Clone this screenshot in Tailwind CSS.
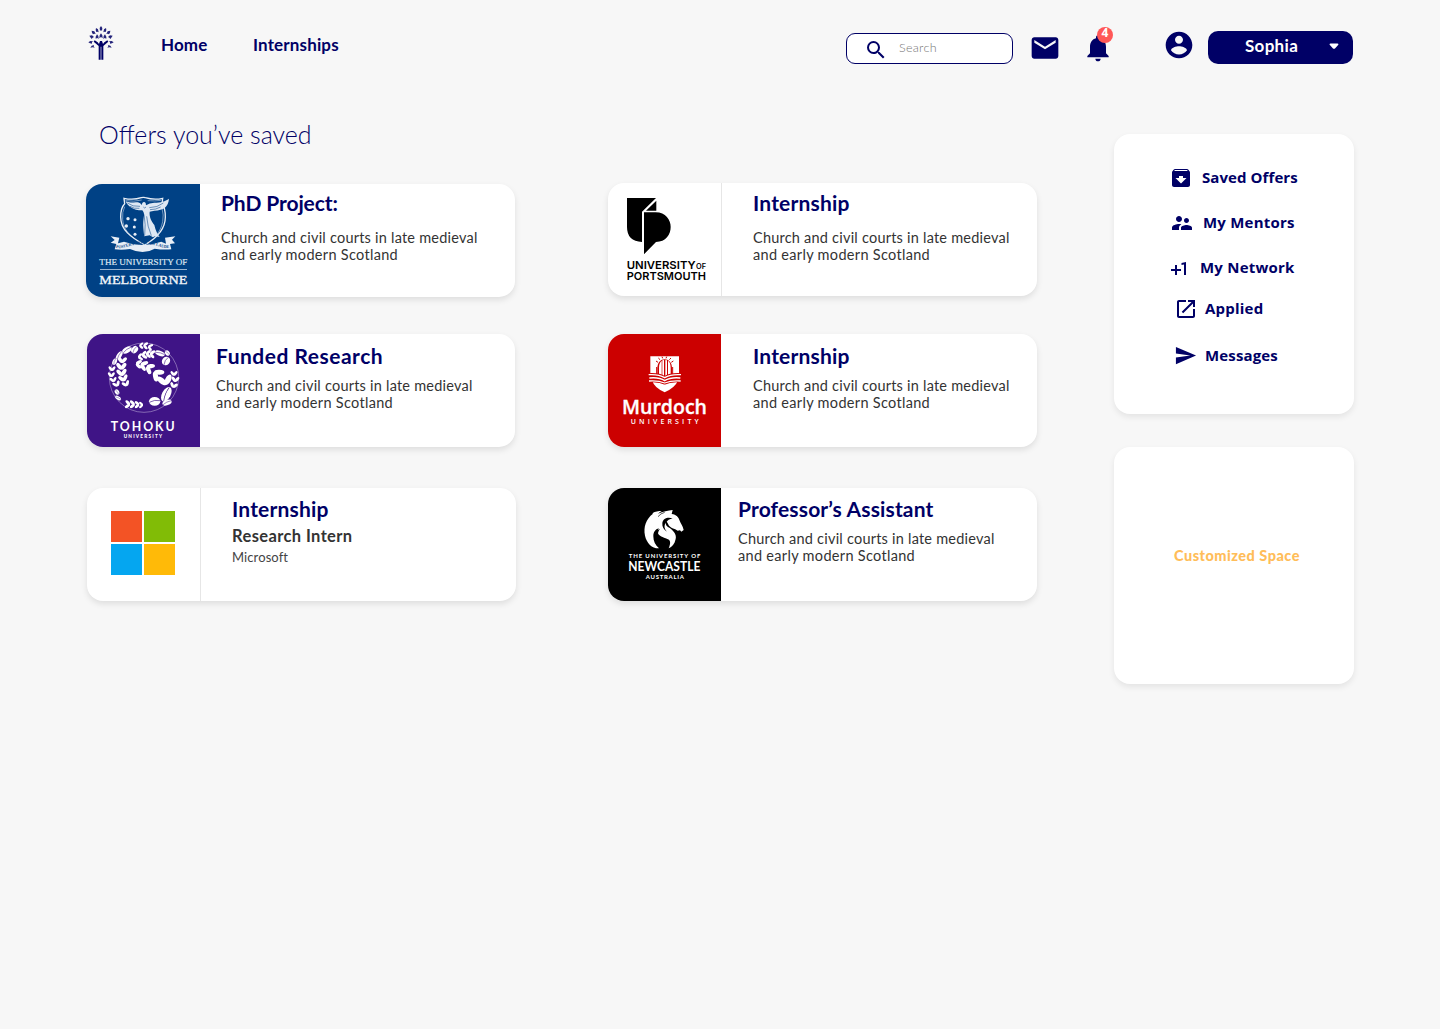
<!DOCTYPE html>
<html lang="en">
<head>
<meta charset="utf-8">
<title>Saved offers</title>
<script src="https://cdn.jsdelivr.net/npm/@tailwindcss/browser@4"></script>
</head>
<body class="min-h-screen bg-[#f7f7f7] font-['Lato',sans-serif] text-[#000066]">
<header class="flex h-[92px] items-start pl-[86px] pr-[87px] pt-[22px]">
  <svg class="h-[42px] w-[30px]" viewBox="0 0 90 126" fill="#000066">
    <path d="M38 113V72l-7-6-8-7 3-4 9 6 4 5 3-9h6l3 9 4-5 9-6 3 4-8 7-7 6v41h-6V74h-2v39z"/>
    <g opacity=".85">
      <path d="M45 12l4 6-1 9-3-3-3 3-1-9zM30 18l6 4 2 9-4-2-3 1-2-6zM60 18l-6 4-2 9 4-2 3 1 2-6zM17 26l8 2 4 8-4-1-4 2-3-5zM73 26l-8 2-4 8 4-1 4 2 3-5zM10 41l8-1 6 5-4 2-3 4-4-5zM80 41l-8-1-6 5 4 2 3 4 4-5zM7 61l6-4 8 1-3 3 0 4-6-1zM83 61l-6-4-8 1 3 3 0 4 6-1zM13 77l4-6 7-2-1 4 3 4-6-1zM77 77l-4-6-7-2 1 4-3 4 6-1z"/>
      <path d="M33 37l4 5 1 9-4-3-5 2v-6zM45 34l4 6 1 9-5-4-5 4 1-9zM57 37l-4 5-1 9 4-3 5 2v-6z"/>
    </g>
  </svg>
  <nav class="ml-[45px] mt-[11px] flex text-[17px] font-bold leading-6">
    <a class="w-[92px] tracking-[0.1px]">Home</a>
    <a class="tracking-[0.15px]">Internships</a>
  </nav>
  <div class="ml-auto flex items-start">
    <div class="mt-[11px] flex h-[31px] w-[167px] items-start rounded-[9px] border border-[#000066] bg-white pl-[17px]">
      <svg class="mt-[4px] h-6 w-6" viewBox="0 0 24 24" fill="#000066"><path d="M15.5 14h-.79l-.28-.27A6.47 6.47 0 0 0 16 9.5 6.5 6.5 0 1 0 9.5 16c1.61 0 3.09-.59 4.23-1.57l.27.28v.79l5 4.99L20.49 19zm-6 0C7.01 14 5 11.99 5 9.5S7.01 5 9.5 5 14 7.01 14 9.5 11.99 14 9.5 14z"/></svg>
      <span class="ml-[11px] mt-[5px] text-[12.5px] font-light leading-[18px] tracking-[0.3px] text-[#757575]">Search</span>
    </div>
    <svg class="ml-[16px] mt-[10px] h-[32px] w-[32px]" viewBox="0 0 24 24" fill="#000066"><path d="M20 4H4c-1.100 0-2 .9-2 2v12c0 1.100.9 2 2 2h16c1.100 0 2-.9 2-2V6c0-1.100-.9-2-2-2zm0 4l-8 5-8-5V6l8 5 8-5z"/></svg>
    <div class="relative ml-[21px] mt-[10px] h-[32px] w-[32px]">
      <svg class="h-[32px] w-[32px]" viewBox="0 0 24 24" fill="#000066"><path d="M12 22c1.100 0 2-.9 2-2h-4c0 1.100.89 2 2 2zm6-6v-5c0-3.070-1.640-5.640-4.500-6.320V4c0-.83-.67-1.500-1.500-1.500s-1.500.67-1.500 1.500v.68C7.630 5.360 6 7.920 6 11v5l-2 2v1h16v-1z"/></svg>
      <span class="absolute -top-[5px] left-[15px] flex h-4 w-4 justify-center rounded-full bg-[#ff5757] font-['Open_Sans',sans-serif] text-[12px] font-bold leading-[12px] text-white">4</span>
    </div>
    <svg class="ml-[49px] mt-[7px] h-[32px] w-[32px]" viewBox="0 0 24 24" fill="#000066"><path d="M12 2C6.480 2 2 6.480 2 12s4.480 10 10 10 10-4.480 10-10S17.520 2 12 2zm0 3c1.660 0 3 1.340 3 3s-1.340 3-3 3-3-1.340-3-3 1.340-3 3-3zm0 14.200c-2.500 0-4.710-1.280-6-3.220.03-1.990 4-3.080 6-3.080 1.990 0 5.970 1.090 6 3.080-1.290 1.940-3.500 3.220-6 3.220z"/></svg>
    <button class="ml-[13px] mt-[9px] flex h-[33px] w-[145px] items-start rounded-[10px] bg-[#000066] pl-[37px] text-white">
      <span class="mt-[3px] text-[17px] font-bold leading-6 tracking-[0.3px]">Sophia</span>
      <svg class="ml-auto mr-[14px] mt-[12px] h-[7px] w-[10px]" viewBox="0 0 10 7" fill="#fff"><path d="M1.500.5h7c1 0 1.200 1 .6 1.600L6 5.400c-.6.600-1.400.6-2 0L.9 2.100C.3 1.500.5.500 1.500.5z"/></svg>
    </button>
  </div>
</header>

<main class="flex items-start pl-[86px]">
  <section class="w-[951px]">
    <h1 class="h-[91px] pl-[13px] pt-[26px] text-[25px] font-light leading-8">Offers you’ve saved</h1>
    <div class="grid grid-cols-[430px_429px] gap-x-[92px]">

      <article class="mt-px flex h-[113px] w-[429px] overflow-hidden rounded-2xl bg-white shadow-[0_3px_6px_rgba(0,0,0,0.1)]">
        <svg class="h-[113px] w-[114px] shrink-0" viewBox="18 27 342 339" preserveAspectRatio="none">
          <rect x="18" y="27" width="342" height="339" fill="#004185"/>
          <g fill="none" stroke="#e8eef6" stroke-width="3">
            <path d="M132 70q28 6 52-2 6-2 12 0 26 8 52 2l-2 16q10 12 10 40c0 35-20 60-62 84-42-24-72-45-72-84q0-28 12-40z" stroke-width="4"/>
            <path d="M137 77q25 4 48-2M203 77q22 2 40-1M134 95q-8 16-6 38c2 24 14 42 34 56M246 100q6 20 2 40c-3 18-12 34-24 46" stroke-width="1.500"/>
          </g>
          <path d="M130 74c10 10 30 8 44 8q8 2 11 8l2-6q5-6 10 0l1 7q10-8 25-8c20 0 32-4 44-12-2 24-16 35-44 36l-14 3c-2 16 6 30 14 40 4 16 8 26 16 36l-14-3-6 4-10-6-16 3c-4-28-4-40-2-56 2-10 2-14-4-22-28 0-44-12-53-32z" fill="#dfe8f3"/>
          <path d="M142 84q16 12 38 10M150 94q12 8 28 6M208 98q24 0 42-14M210 104q18 0 32-8M192 118q6 30 2 64M200 124q2 30 14 58M190 96q4 6 8 0" fill="none" stroke="#004185" stroke-width="1.600"/>
          <g fill="#e8eef6"><circle cx="144" cy="131" r="5"/><circle cx="165" cy="134" r="4.500"/><circle cx="139" cy="153" r="5"/><circle cx="163" cy="156" r="4.500"/><circle cx="165" cy="178" r="4.500"/></g>
          <path d="M92 184l26 4-4 17 18-5q55 20 112 0l14 6-3-18 31-4-10 10 9 11-15 2 4 16q-26 2-50-2-34 20-74 1-24 4-46 1l5-16-17-4 12-8z" fill="#e8eef6"/>
          <path id="motto" d="M108 219q20 2 40-6 42-10 84 0 20 8 42 6" fill="none"/>
          <text font-family="Liberation Serif" font-size="13" font-weight="700" fill="#0c4a8c" textLength="162" lengthAdjust="spacingAndGlyphs"><textPath href="#motto">POSTERA CRESCAM LAUDE</textPath></text>
          <text x="58" y="269" font-family="Liberation Serif" font-size="27" fill="#dfe8f3" stroke="#dfe8f3" stroke-width=".5" textLength="264" lengthAdjust="spacingAndGlyphs">THE UNIVERSITY OF</text>
          <rect x="60" y="282" width="261" height="2.500" fill="#b8cce0"/>
          <text x="58" y="327" font-family="Liberation Serif" font-size="39" fill="#f2f6fa" stroke="#f2f6fa" stroke-width="1" textLength="264" lengthAdjust="spacingAndGlyphs">MELBOURNE</text>
        </svg>
        <div class="pl-[21px] pt-[5px]">
          <h2 class="text-[21px] font-bold leading-7 -tracking-[0.1px]">PhD Project:</h2>
          <p class="mt-[12px] text-[14.5px] leading-[17px] tracking-[0.22px] text-[#333]">Church and civil courts in late medieval<br><span class="tracking-[0.31px]">and early modern Scotland</span></p>
        </div>
      </article>

      <article class="flex h-[113px] w-[429px] overflow-hidden rounded-2xl bg-white shadow-[0_3px_6px_rgba(0,0,0,0.1)]">
        <div class="h-[113px] w-[114px] shrink-0 border-r border-[#e6e6e6]">
          <svg class="h-[113px] w-[113px]" viewBox="24 24 339 339" fill="#000">
            <path d="M81 69h87L126 110v91q-45-2-45-45z"/>
            <path d="M169 77v30h-31z"/>
            <path d="M132 112h35c60 0 60 89 1 89L132 238z"/>
            <g font-family="Inter" font-weight="600">
              <text x="80" y="282" font-size="33" textLength="207" lengthAdjust="spacingAndGlyphs">UNIVERSITY</text>
              <text x="288" y="282" font-size="22" textLength="30" lengthAdjust="spacingAndGlyphs">OF</text>
              <text x="80" y="315" font-size="33" textLength="238" lengthAdjust="spacingAndGlyphs">PORTSMOUTH</text>
            </g>
          </svg>
        </div>
        <div class="pl-[31px] pt-[6px]">
          <h2 class="text-[21px] font-bold leading-7 tracking-[0.2px]">Internship</h2>
          <p class="mt-[12px] text-[14.5px] leading-[17px] tracking-[0.22px] text-[#333]">Church and civil courts in late medieval<br><span class="tracking-[0.31px]">and early modern Scotland</span></p>
        </div>
      </article>

      <article class="ml-px mt-[37px] flex h-[113px] w-[428px] overflow-hidden rounded-2xl bg-white shadow-[0_3px_6px_rgba(0,0,0,0.1)]">
        <svg class="h-[113px] w-[113px] shrink-0" viewBox="21 27 339 339">
          <defs>
            <g id="pair"><ellipse cx="-5" cy="-1" rx="4.500" ry="9" transform="rotate(-38 -5 -1)"/><ellipse cx="5" cy="-1" rx="4.500" ry="9" transform="rotate(38 5 -1)"/></g>
            <g id="bean"><ellipse rx="17" ry="13" /><path d="M-16 3Q0-6 16-2" fill="none" stroke="#3f1486" stroke-width="2"/></g>
          </defs>
          <rect x="21" y="27" width="339" height="339" fill="#3f1486"/>
          <circle cx="192" cy="158" r="104" fill="none" stroke="#cbbde0" stroke-width="1.500"/>
          <g fill="#fff">
            <use href="#pair" transform="translate(126 106) rotate(8) scale(1.200)"/>
            <use href="#pair" transform="translate(124 125) scale(1.300)"/>
            <use href="#pair" transform="translate(125 144) rotate(-5) scale(1.300)"/>
            <use href="#pair" transform="translate(130 161) rotate(-14) scale(1.200)"/>
            <use href="#pair" transform="translate(138 177) rotate(-24) scale(1)"/>
            <use href="#pair" transform="translate(175 117) rotate(98) scale(1.100)"/>
            <use href="#pair" transform="translate(190 121) rotate(108) scale(1.300)"/>
            <use href="#pair" transform="translate(208 129) rotate(118) scale(1.400)"/>
            <use href="#pair" transform="translate(231 147) rotate(130) scale(1.700)"/>
            <use href="#pair" transform="translate(255 168) rotate(-10) scale(1.900)"/>
            <use href="#pair" transform="translate(180 96) rotate(80) scale(.9)"/>
            <use href="#pair" transform="translate(192 90) rotate(80) scale(1)"/>
            <use href="#pair" transform="translate(204 87) rotate(90) scale(1)"/>
            <use href="#pair" transform="translate(216 87) rotate(100) scale(1)"/>
            <use href="#pair" transform="translate(144 238) rotate(-85) scale(1)"/>
            <use href="#pair" transform="translate(158 238) rotate(-90) scale(1)"/>
            <use href="#pair" transform="translate(172 239) rotate(-90) scale(.9)"/>
            <use href="#pair" transform="translate(184 240) rotate(-90) scale(.8)"/>
            <use href="#pair" transform="translate(183 62) rotate(90) scale(.8)"/>
            <use href="#pair" transform="translate(196 62) rotate(95) scale(.9)"/>
            <use href="#pair" transform="translate(210 66) rotate(105) scale(.9)"/>
            <use href="#pair" transform="translate(96 132) scale(.9)"/>
            <use href="#pair" transform="translate(94 150) scale(.9)"/>
            <use href="#pair" transform="translate(100 165) rotate(-10) scale(.9)"/>
            <use href="#pair" transform="translate(110 178) rotate(-25) scale(1)"/>
            <use href="#pair" transform="translate(282 146) scale(.9)"/>
            <use href="#pair" transform="translate(286 164) rotate(5) scale(1)"/>
            <use href="#pair" transform="translate(281 182) rotate(15) scale(1)"/>
            <use href="#bean" transform="translate(224 229)"/>
            <use href="#bean" transform="translate(259 208) rotate(-62) scale(1.400 1)"/>
            <use href="#bean" transform="translate(261 233) rotate(-20) scale(.85 .6)"/>
            <use href="#bean" transform="translate(258 108) rotate(-50) scale(.8 .9)"/>
            <use href="#bean" transform="translate(240 85) rotate(20) scale(.9 .6)"/>
            <use href="#bean" transform="translate(262 84) rotate(50) scale(.5 .5)"/>
            <use href="#bean" transform="translate(164 74) rotate(-50) scale(.7 .7)"/>
            <use href="#bean" transform="translate(141 75) rotate(-30) scale(.9 .65)"/>
            <use href="#bean" transform="translate(118 91) rotate(-55) scale(.8 .55)"/>
            <use href="#bean" transform="translate(104 110) rotate(-65) scale(.6 .5)"/>
            <use href="#bean" transform="translate(111 201) rotate(60) scale(.5 .5)"/>
            <use href="#bean" transform="translate(114 219) rotate(30) scale(.6 .4)"/>
          </g>
          <g fill="#fff" font-family="Lato">
            <text x="92" y="317" font-size="37" font-weight="700" textLength="192">TOHOKU</text>
            <text x="131" y="339" font-size="14" font-weight="900" textLength="115">UNIVERSITY</text>
          </g>
        </svg>
        <div class="pl-[16px] pt-[8px]">
          <h2 class="text-[21px] font-bold leading-7 tracking-[0.5px]">Funded Research</h2>
          <p class="mt-[7px] text-[14.5px] leading-[17px] tracking-[0.22px] text-[#333]">Church and civil courts in late medieval<br><span class="tracking-[0.31px]">and early modern Scotland</span></p>
        </div>
      </article>

      <article class="mt-[37px] flex h-[113px] w-[429px] overflow-hidden rounded-2xl bg-white shadow-[0_3px_6px_rgba(0,0,0,0.1)]">
        <svg class="h-[113px] w-[113px] shrink-0" viewBox="24 27 339 339">
          <rect x="24" y="27" width="339" height="339" fill="#c00"/>
          <path d="M151 94h86v54h-86z" fill="#fff"/>
          <path d="M158 170q18 2 36 5 18-3 38-5-6 16-38 32-32-16-36-32z" fill="#fff"/>
          <path d="M172 152v-22c0-36 44-36 44 0v22" fill="#c00"/>
          <path d="M170 148v-22M174 112l-6-4M180 104l-5-5M188 100l-2-5M198 100l2-5M208 104l5-5M214 112l6-4M218 126v22" stroke="#c00" stroke-width="3"/>
          <path d="M177 154v-26c0-12 4-18 8-21v47zM187 156v-50l5-1v51zM196 156v-51l5 1v50zM204 154v-47c5 4 8 9 8 21v26z" fill="#fff"/>
          <path d="M146 149q30-2 48 9 18-11 49-9M148 159q30-3 46 8 18-11 47-8M147 168q28-2 47 6 20-8 48-6" fill="none" stroke="#c00" stroke-width="9"/>
          <path d="M146 149q30-2 48 9 18-11 49-9M148 159q30-3 46 8 18-11 47-8M147 168q28-2 47 6 20-8 48-6" fill="none" stroke="#fff" stroke-width="4"/>
          <text x="66" y="266" font-family="Open Sans" font-size="60" font-weight="600" fill="#fff" stroke="#fff" stroke-width="1" textLength="255" lengthAdjust="spacingAndGlyphs">Murdoch</text>
          <text x="92" y="297" font-family="Open Sans" font-size="21" font-weight="600" fill="#fff" textLength="204">UNIVERSITY</text>
        </svg>
        <div class="pl-[32px] pt-[8px]">
          <h2 class="text-[21px] font-bold leading-7 tracking-[0.2px]">Internship</h2>
          <p class="mt-[7px] text-[14.5px] leading-[17px] tracking-[0.22px] text-[#333]">Church and civil courts in late medieval<br><span class="tracking-[0.31px]">and early modern Scotland</span></p>
        </div>
      </article>

      <article class="ml-px mt-[41px] flex h-[113px] w-[429px] overflow-hidden rounded-2xl bg-white shadow-[0_3px_6px_rgba(0,0,0,0.1)]">
        <div class="h-[113px] w-[114px] shrink-0 border-r border-[#e6e6e6] pl-[24px] pt-[23px]">
          <div class="grid h-16 w-16 grid-cols-2 gap-[2px]">
            <i class="bg-[#f35325]"></i><i class="bg-[#81bc06]"></i>
            <i class="bg-[#05a6f0]"></i><i class="bg-[#ffba08]"></i>
          </div>
        </div>
        <div class="pl-[31px] pt-[7px]">
          <h2 class="text-[21px] font-bold leading-7 tracking-[0.2px]">Internship</h2>
          <h3 class="mt-px text-[16.5px] font-bold leading-6 tracking-[0.38px] text-[#333]">Research Intern</h3>
          <p class="text-[13px] leading-[19px] tracking-[0.1px] text-[#444]">Microsoft</p>
        </div>
      </article>

      <article class="mt-[41px] flex h-[113px] w-[429px] overflow-hidden rounded-2xl bg-white shadow-[0_3px_6px_rgba(0,0,0,0.1)]">
        <svg class="h-[113px] w-[113px] shrink-0" viewBox="24 24 339 339">
          <rect x="24" y="24" width="339" height="339" fill="#000"/>
          <path d="M218 90l-3 12c14 2 21 10 24 20 3 8 9 14 12 28l-7 5-4-4-7 1c-8-8-24-6-29-21l-5-8c-4 6-2 13 5 18 14 8 27 22 23 36-3 15-11 24-21 28 6-14 7-24-4-28-14-5-25-9-28-17-2-5-1-11 3-15-12 3-17 12-17 24 0 14 6 27 17 36-20 1-37-15-42-38-5-27 3-50 24-66l-2-1c9-6 18-7 28-7-4 2-8 5-11 8 14-7 31-9 44-11z" fill="#fff"/>
          <path d="M218 115c-14-5-29-1-31 14-1 12 4 20 14 26-9-8-9-19-4-26 5-8 12-12 21-14zM180 147c-11 3-16 11-15 21 3 20 14 34 30 40-8-12-17-22-20-34-3-11-1-20 5-27z" fill="#000"/>
          <path d="M174 110q8-10 20-13" fill="none" stroke="#000" stroke-width="2"/>
          <g fill="#fff" font-family="Lato">
            <text x="86" y="235" font-size="18" font-weight="700" textLength="215">THE UNIVERSITY OF</text>
            <text x="85" y="273" font-size="37" font-weight="700" textLength="216" lengthAdjust="spacingAndGlyphs">NEWCASTLE</text>
            <text x="137" y="297" font-size="18" font-weight="700" textLength="115">AUSTRALIA</text>
          </g>
        </svg>
        <div class="pl-[17px] pt-[7px]">
          <h2 class="text-[21px] font-bold leading-7 tracking-[0.15px]">Professor’s Assistant</h2>
          <p class="mt-[7px] text-[14.5px] leading-[17px] tracking-[0.22px] text-[#333]">Church and civil courts in late medieval<br><span class="tracking-[0.31px]">and early modern Scotland</span></p>
        </div>
      </article>
    </div>
  </section>

  <aside class="ml-[77px] mt-[42px] w-60">
    <ul class="h-[280px] rounded-2xl bg-white pt-[32px] font-['Open_Sans',sans-serif] text-[15px] font-bold leading-[22px] tracking-[0.22px] shadow-[0_3px_6px_rgba(0,0,0,0.08)]">
      <li class="flex h-[45px] items-start pl-[55px]">
        <svg class="h-6 w-6" viewBox="0 0 24 24" fill="#000066"><path d="M20.540 5.230l-1.390-1.680C18.880 3.210 18.470 3 18 3H6c-.47 0-.88.21-1.160.55L3.460 5.230C3.170 5.570 3 6.020 3 6.500V19c0 1.100.9 2 2 2h14c1.100 0 2-.9 2-2V6.500c0-.48-.17-.93-.46-1.270zM12 17.500L6.500 12H10v-2h4v2h3.500L12 17.500zM5.120 5l.81-1h12l.94 1H5.120z"/></svg>
        <span class="ml-[9px] tracking-[0.08px]">Saved Offers</span></li>
      <li class="flex h-[45px] items-start pl-[56px]">
        <svg class="h-6 w-6" viewBox="0 0 24 24" fill="#000066"><path d="M16.500 12c1.380 0 2.490-1.120 2.490-2.500S17.880 7 16.500 7 14 8.120 14 9.500s1.120 2.500 2.500 2.500zM9 11c1.660 0 2.990-1.340 2.990-3S10.660 5 9 5 6 6.340 6 8s1.340 3 3 3zm7.500 3c-1.830 0-5.500.92-5.500 2.750V19h11v-2.250c0-1.830-3.670-2.750-5.500-2.750zM9 13c-2.330 0-7 1.170-7 3.500V19h7v-2.250c0-.85.33-2.340 2.370-3.470C10.500 13.100 9.660 13 9 13z"/></svg>
        <span class="ml-[9px]">My Mentors</span></li>
      <li class="flex h-[41px] items-start pl-[53px]">
        <svg class="mt-px h-6 w-6" viewBox="0 0 24 24" fill="#000066"><path d="M10 8H8v4H4v2h4v4h2v-4h4v-2h-4zm4.500-1.920V7.900l2.500-.5V18h2V5z"/></svg>
        <span class="ml-[9px]">My Network</span></li>
      <li class="flex h-[47px] items-start pl-[60px]">
        <svg class="h-6 w-6" viewBox="0 0 24 24" fill="#000066"><path d="M19 19H5V5h7V3H5c-1.110 0-2 .9-2 2v14c0 1.100.89 2 2 2h14c1.100 0 2-.9 2-2v-7h-2zM14 3v2h3.590l-9.830 9.830 1.410 1.410L19 6.410V10h2V3z"/></svg>
        <span class="ml-[7px]">Applied</span></li>
      <li class="flex items-start pl-[60px]">
        <svg class="h-[23px] w-[23px]" viewBox="0 0 24 24" fill="#000066"><path d="M2.010 21L23 12 2.010 3 2 10l15 2-15 2z"/></svg>
        <span class="ml-[8px] tracking-[0.15px]">Messages</span></li>
    </ul>
    <div class="mt-[33px] flex h-[237px] justify-center rounded-2xl bg-white pt-[99px] text-[14.5px] font-black leading-5 tracking-[0.48px] text-[#ffbd59] shadow-[0_3px_6px_rgba(0,0,0,0.08)]">
      <span class="pl-[6px]">Customized Space</span>
    </div>
  </aside>
</main>
</body>
</html>
